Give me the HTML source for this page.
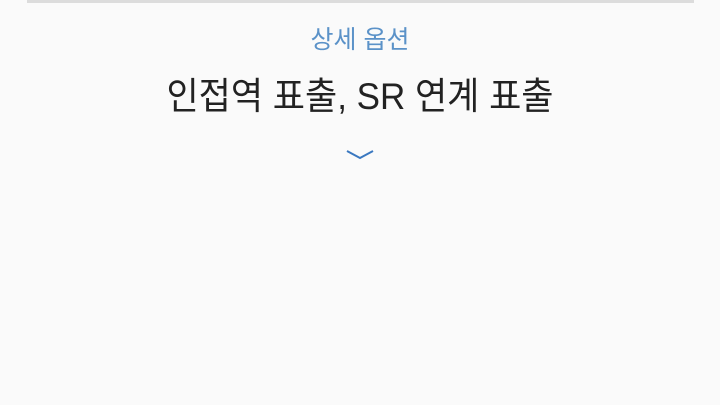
<!DOCTYPE html>
<html><head><meta charset="utf-8"><style>
html,body{margin:0;padding:0;width:720px;height:405px;background:#fafafa;overflow:hidden;font-family:"Liberation Sans","Noto Sans CJK KR",sans-serif;}
.bar{position:absolute;left:27px;top:0;width:667px;height:3px;background:#dcdcdc;}
.sub{position:absolute;left:0;width:720px;top:23px;text-align:center;font-size:25px;color:#5b92c8;line-height:34px;}
.title{position:absolute;left:0;width:720px;top:74px;text-align:center;font-size:35px;color:#222;line-height:46px;transform:scaleY(1.07);}
svg{position:absolute;left:345px;top:148px;}
</style></head><body>
<div class="bar"></div>
<div class="sub">상세 옵션</div>
<div class="title">인접역 표출, SR 연계 표출</div>
<svg width="30" height="12" viewBox="0 0 30 12"><path d="M2 3 L15 10 L28 3" fill="none" stroke="#3a78c0" stroke-width="2"/></svg>
</body></html>
